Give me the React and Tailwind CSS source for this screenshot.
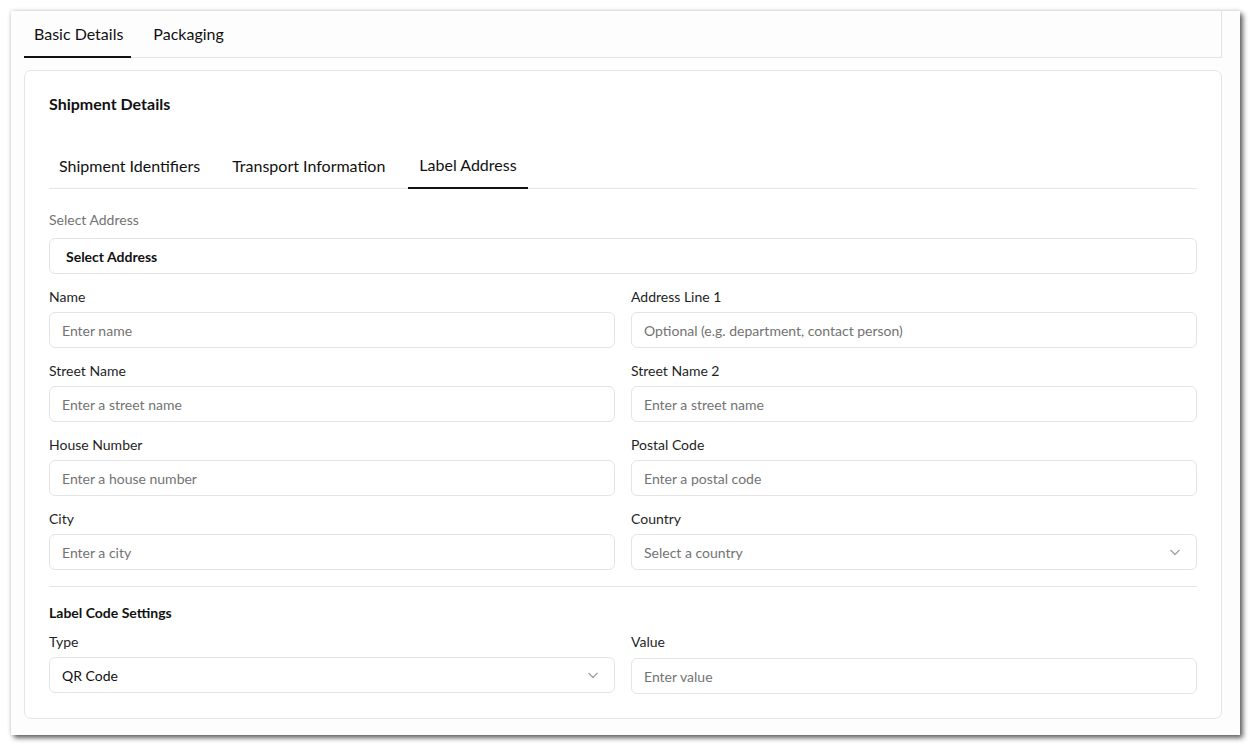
import React from "react";

const font = { fontFamily: "Lato, 'Noto Sans', sans-serif" };

function Chevron() {
  return (
    <svg width="20" height="20" viewBox="0 0 24 24" fill="none" stroke="#a3a3a3" strokeWidth="1.6" strokeLinecap="round" strokeLinejoin="round">
      <path d="m7 10 5 5 5-5" />
    </svg>
  );
}

function Field({ label, placeholder, select }) {
  return (
    <div className="flex flex-col">
      <label className="text-[14px] leading-[20px] text-[#1f1f1f] mb-[5px]">{label}</label>
      <div className={`h-[36px] rounded-[6px] border border-[#e4e4e7] bg-white pl-[12px] flex items-center justify-between ${select ? "pr-[11px]" : "pr-[12px]"}`}>
        <span className="text-[14px] text-[#737373]">{placeholder}</span>
        {select && <Chevron />}
      </div>
    </div>
  );
}

export default function App() {
  return (
    <div className="min-h-screen bg-white pt-[11px] pl-[11px]" style={font}>
      <div className="w-[1229px] h-[724px] bg-[#fdfdfd] shadow-[3px_3px_5px_rgba(0,0,0,0.6),0_0_4px_rgba(0,0,0,0.18)] pl-[13px] pr-[18px]">
        <div className="flex border-b border-r border-[#e5e5e5] h-[47px]">
          <div className="pl-[10px] pr-[8px] flex items-center text-[16px] text-[#111] border-b-2 border-[#111] -mb-px">Basic Details</div>
          <div className="ml-[12px] px-[10px] flex items-center text-[16px] text-[#111]">Packaging</div>
        </div>
        <div className="mt-[12px] rounded-[7px] border border-[#e5e5e5] bg-white px-[24px] pt-[23px] h-[649px]">
          <h2 className="text-[16px] font-bold text-[#111] leading-[20px]">Shipment Details</h2>
          <div className="mt-[29px] flex border-b border-[#e5e5e5] h-[46px]">
            <div className="px-[10px] flex items-center text-[16px] text-[#111]">Shipment Identifiers</div>
            <div className="px-[22px] flex items-center text-[16px] text-[#111]">Transport Information</div>
            <div className="ml-[1px] px-[11px] flex items-center text-[16px] text-[#111] border-b-2 border-[#111] -mb-px">Label Address</div>
          </div>
          <div className="mt-[21px] text-[14px] leading-[20px] text-[#737373]">Select Address</div>
          <div className="mt-[8px] h-[36px] rounded-[6px] border border-[#e4e4e7] flex items-center px-[16px] text-[14px] font-bold text-[#111]">Select Address</div>
          <div className="mt-[13px] grid grid-cols-2 gap-x-[16px] gap-y-[13px]">
            <Field label="Name" placeholder="Enter name" />
            <Field label="Address Line 1" placeholder="Optional (e.g. department, contact person)" />
            <Field label="Street Name" placeholder="Enter a street name" />
            <Field label="Street Name 2" placeholder="Enter a street name" />
            <Field label="House Number" placeholder="Enter a house number" />
            <Field label="Postal Code" placeholder="Enter a postal code" />
            <Field label="City" placeholder="Enter a city" />
            <Field label="Country" placeholder="Select a country" select />
          </div>
          <div className="mt-[16px] border-t border-[#e5e5e5]" />
          <div className="mt-[16px] text-[14px] font-bold leading-[20px] text-[#111]">Label Code Settings</div>
          <div className="mt-[9px] grid grid-cols-2 gap-x-[16px]">
            <div className="flex flex-col">
              <label className="text-[14px] leading-[20px] text-[#1f1f1f] mb-[5px]">Type</label>
              <div className="h-[36px] rounded-[6px] border border-[#e4e4e7] pl-[12px] pr-[11px] flex items-center justify-between">
                <span className="text-[14px] text-[#111]">QR Code</span>
                <Chevron />
              </div>
            </div>
            <div className="flex flex-col">
              <label className="text-[14px] leading-[20px] text-[#1f1f1f] mb-[6px]">Value</label>
              <div className="h-[36px] rounded-[6px] border border-[#e4e4e7] px-[12px] flex items-center">
                <span className="text-[14px] text-[#737373]">Enter value</span>
              </div>
            </div>
          </div>
        </div>
      </div>
    </div>
  );
}
